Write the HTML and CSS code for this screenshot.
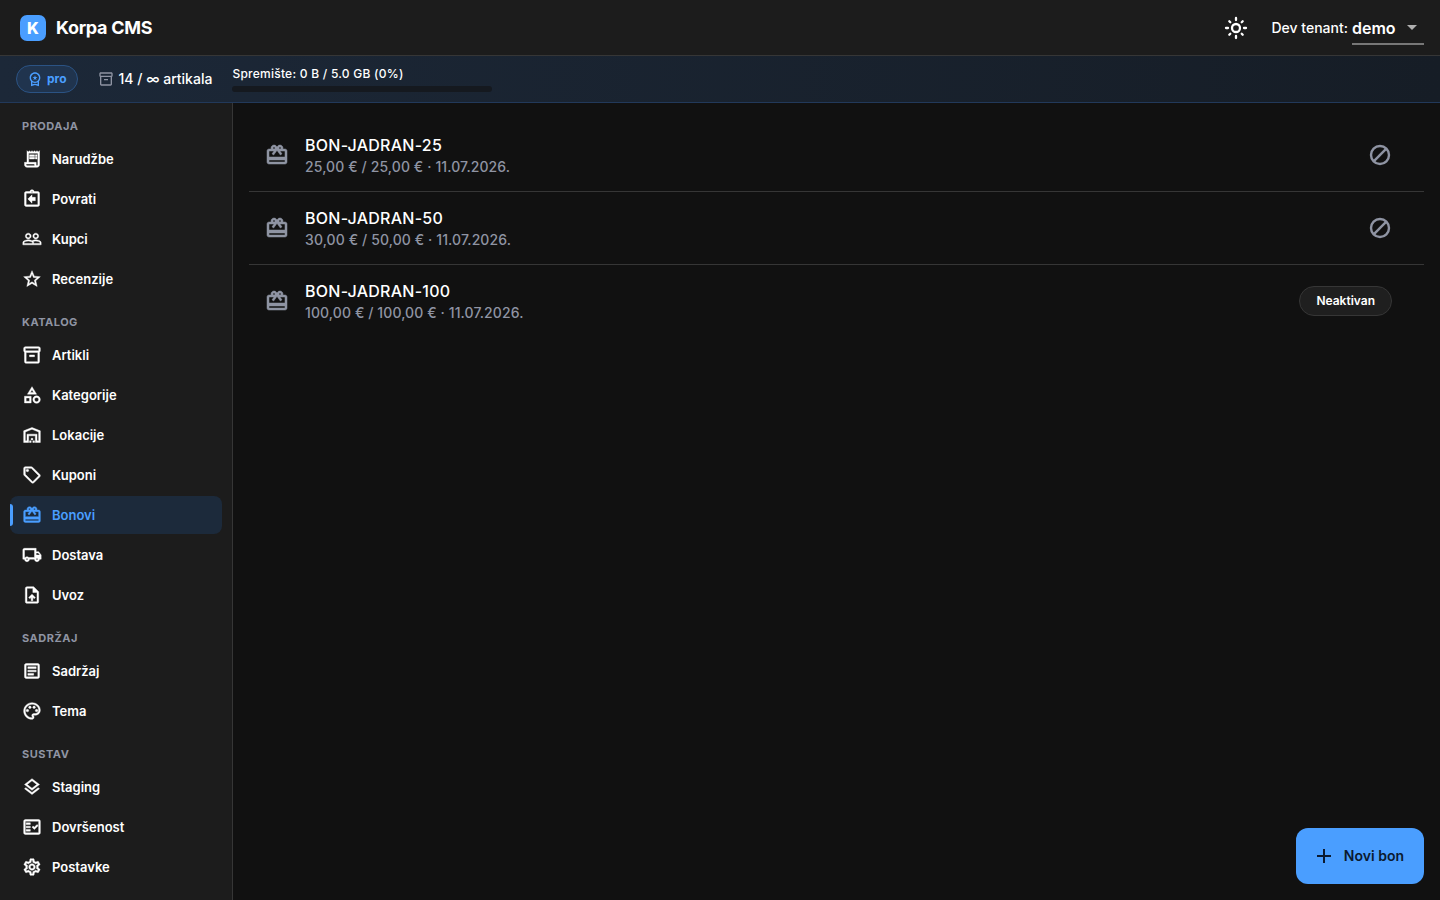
FILE: index.html
```html
<!DOCTYPE html>
<html lang="hr">
<head>
<meta charset="utf-8">
<meta name="viewport" content="width=device-width, initial-scale=1">
<title>Korpa CMS</title>
<link rel="stylesheet" href="styles.css">
</head>
<body>
<svg class="sprite" aria-hidden="true">
  <symbol id="gift" viewBox="0 0 24 24"><path d="M20 6h-2.18c.11-.31.18-.65.18-1 0-1.66-1.34-3-3-3-1.05 0-1.96.54-2.5 1.35l-.5.67-.5-.68C10.96 2.54 10.05 2 9 2 7.34 2 6 3.34 6 5c0 .35.07.69.18 1H4c-1.11 0-1.99.89-1.99 2L2 19c0 1.11.89 2 2 2h16c1.11 0 2-.89 2-2V8c0-1.11-.89-2-2-2zm-5-2c.55 0 1 .45 1 1s-.45 1-1 1-1-.45-1-1 .45-1 1-1zM9 4c.55 0 1 .45 1 1s-.45 1-1 1-1-.45-1-1 .45-1 1-1zm11 15H4v-2h16v2zm0-5H4V8h5.08L7 10.83 8.62 12 11 8.76l1-1.36 1 1.36L15.38 12 17 10.83 14.92 8H20v6z"/></symbol>
  <symbol id="box" viewBox="0 0 24 24"><path d="M20 2H4c-1 0-2 .9-2 2v3.01c0 .72.43 1.34 1 1.69V20c0 1.1 1.1 2 2 2h14c.9 0 2-.9 2-2V8.700c.57-.35 1-.97 1-1.690V4c0-1.100-1-2-2-2zm-1 18H5V9h14v11zm1-13H4V4h16v3zM9 12h6v2H9z"/></symbol>
  <symbol id="block" viewBox="0 0 24 24"><g fill="none" stroke="currentColor" stroke-width="2.4"><circle cx="12" cy="12" r="9"/><path d="M5.900 18.100L18.100 5.900"/></g></symbol>
</svg>

<header class="topbar">
  <div class="brand"><span class="brand-mark">K</span><span class="brand-name">Korpa CMS</span></div>
  <button class="icon-button theme" type="button" aria-label="Promijeni temu">
    <svg class="icon" viewBox="0 0 24 24"><g fill="none" stroke="currentColor" stroke-width="2.300" stroke-linecap="round"><circle cx="12" cy="12" r="4"/><path d="M12 2v2M12 20v2M2 12h2M20 12h2M5.300 5.300l1 1M17.700 17.700l1 1M18.700 5.300l-1 1M6.300 17.700l-1 1"/></g></svg>
  </button>
  <label class="tenant-label" for="tenant">Dev tenant:</label>
  <div class="select-wrap">
    <select id="tenant" class="tenant"><option>demo</option></select>
    <svg class="caret" viewBox="0 0 24 24"><path d="M7 10l5 5 5-5z"/></svg>
  </div>
</header>

<section class="planbar">
  <span class="plan"><svg class="plan-icon" viewBox="0 0 24 24"><path d="M9.680 13.690L12 11.930l2.310 1.760-.88-2.850L15.750 9h-2.840L12 6.190 11.090 9H8.250l2.310 1.840-.88 2.850zM20 10c0-4.420-3.580-8-8-8s-8 3.580-8 8c0 2.030.76 3.870 2 5.280V23l6-2 6 2v-7.720c1.240-1.410 2-3.250 2-5.280zm-8-6c3.310 0 6 2.690 6 6s-2.690 6-6 6-6-2.690-6-6 2.690-6 6-6zm0 15l-4 1.020v-3.100c1.180.68 2.540 1.080 4 1.080s2.820-.4 4-1.080v3.100L12 19z"/></svg>pro</span>
  <span class="usage"><svg class="usage-icon" viewBox="0 0 24 24"><use href="#box"/></svg>14 / ∞ artikala</span>
  <div class="storage"><span id="storage-label">Spremište: 0 B / 5.0 GB (0%)</span><div class="meter" role="progressbar" aria-labelledby="storage-label" aria-valuenow="0" aria-valuemin="0" aria-valuemax="100"></div></div>
</section>

<div class="shell">
  <nav class="sidebar">
    <h2 class="group">Prodaja</h2>
    <a class="item" href="#"><svg class="nav-icon" viewBox="0 0 24 24"><path d="M19.500 3.500L18 2l-1.500 1.500L15 2l-1.500 1.500L12 2l-1.500 1.500L9 2 7.500 3.500 6 2v14H3v3c0 1.660 1.340 3 3 3h12c1.660 0 3-1.340 3-3V2l-1.500 1.500zM15 20H6c-.55 0-1-.45-1-1v-1h10v2zm4-1c0 .55-.45 1-1 1s-1-.45-1-1v-3H8V5h11v14z"/><path d="M9 7h6v2H9zM16 7h2v2h-2zM9 10h6v2H9zM16 10h2v2h-2z"/></svg>Narudžbe</a>
    <a class="item" href="#"><svg class="nav-icon" viewBox="0 0 24 24"><path fill-rule="evenodd" d="M19 3h-4.180C14.400 1.840 13.300 1 12 1s-2.400.84-2.820 2H5c-1.100 0-2 .9-2 2v14c0 1.100.9 2 2 2h14c1.100 0 2-.9 2-2V5c0-1.100-.9-2-2-2zm-7-.25c.41 0 .75.34.75.75s-.34.75-.75.75-.75-.34-.75-.75.34-.75.75-.75zM19 19H5V5h14v14z"/><path d="M12 17v-3h4v-4h-4V7l-5 5z"/></svg>Povrati</a>
    <a class="item" href="#"><svg class="nav-icon" viewBox="0 0 24 24"><path d="M16.500 13c-1.200 0-3.070.34-4.500 1-1.430-.67-3.300-1-4.500-1C5.330 13 1 14.080 1 16.250V19h22v-2.750c0-2.170-4.330-3.250-6.500-3.250zm-4 4.500h-10v-1.250c0-.54 2.560-1.750 5-1.750s5 1.210 5 1.750v1.250zm9 0H14v-1.250c0-.46-.2-.86-.52-1.220.88-.3 1.960-.53 3.020-.53 2.440 0 5 1.210 5 1.750v1.250zM7.500 12c1.930 0 3.500-1.570 3.500-3.500S9.430 5 7.500 5 4 6.570 4 8.500 5.570 12 7.500 12zm0-5.500c1.100 0 2 .9 2 2s-.9 2-2 2-2-.9-2-2 .9-2 2-2zm9 5.500c1.930 0 3.500-1.570 3.500-3.500S18.430 5 16.500 5 13 6.570 13 8.500s1.570 3.500 3.500 3.500zm0-5.500c1.100 0 2 .9 2 2s-.9 2-2 2-2-.9-2-2 .9-2 2-2z"/></svg>Kupci</a>
    <a class="item" href="#"><svg class="nav-icon" viewBox="0 0 24 24"><path d="M22 9.240l-7.190-.62L12 2 9.190 8.630 2 9.240l5.460 4.730L5.820 21 12 17.270 18.180 21l-1.630-7.030L22 9.240zM12 15.400l-3.760 2.270 1-4.280-3.320-2.880 4.380-.38L12 6.100l1.710 4.040 4.380.38-3.320 2.880 1 4.280L12 15.400z"/></svg>Recenzije</a>
    <h2 class="group">Katalog</h2>
    <a class="item" href="#"><svg class="nav-icon" viewBox="0 0 24 24"><use href="#box"/></svg>Artikli</a>
    <a class="item" href="#"><svg class="nav-icon" viewBox="0 0 24 24"><path d="M12 2l-5.500 9h11L12 2zm0 3.840L13.930 9h-3.870L12 5.840zM17.500 13c-2.490 0-4.500 2.010-4.500 4.500s2.010 4.500 4.500 4.500 4.500-2.010 4.500-4.500-2.010-4.500-4.500-4.500zm0 7c-1.380 0-2.500-1.120-2.500-2.500s1.120-2.500 2.500-2.500 2.500 1.120 2.500 2.500-1.120 2.500-2.500 2.500zM3 21.500h8v-8H3v8zm2-6h4v4H5v-4z"/></svg>Kategorije</a>
    <a class="item" href="#"><svg class="nav-icon" viewBox="0 0 24 24"><path d="M20 8.350V19h-2v-8H6v8H4V8.350l8-3.200 8 3.200zM22 21V7L12 3 2 7v14h6v-8h8v8h6z"/><path d="M9 19h2v2H9zM11 16h2v2h-2zM13 19h2v2h-2z"/></svg>Lokacije</a>
    <a class="item" href="#"><svg class="nav-icon" viewBox="0 0 24 24"><path d="M21.410 11.410l-8.830-8.830c-.37-.37-.88-.58-1.410-.58H4c-1.100 0-2 .9-2 2v7.170c0 .53.21 1.040.59 1.410l8.830 8.830c.78.78 2.050.78 2.830 0l7.170-7.170c.78-.78.78-2.040-.01-2.830zM12.830 20L4 11.170V4h7.170L20 12.830 12.830 20z"/><circle cx="6.500" cy="6.500" r="1.500"/></svg>Kuponi</a>
    <a class="item active" href="#" aria-current="page"><svg class="nav-icon" viewBox="0 0 24 24"><use href="#gift"/></svg>Bonovi</a>
    <a class="item" href="#"><svg class="nav-icon" viewBox="0 0 24 24"><path d="M20 8h-3V4H3c-1.100 0-2 .9-2 2v11h2c0 1.660 1.340 3 3 3s3-1.340 3-3h6c0 1.660 1.340 3 3 3s3-1.340 3-3h2v-5l-3-4zm-.5 1.500l1.960 2.500H17V9.500h2.500zM6 18c-.55 0-1-.45-1-1s.45-1 1-1 1 .45 1 1-.45 1-1 1zm2.220-3c-.55-.61-1.330-1-2.220-1s-1.670.39-2.220 1H3V6h12v9H8.220zM18 18c-.55 0-1-.45-1-1s.45-1 1-1 1 .45 1 1-.45 1-1 1z"/></svg>Dostava</a>
    <a class="item" href="#"><svg class="nav-icon" viewBox="0 0 24 24"><path d="M14 2H6c-1.100 0-1.990.9-1.990 2L4 20c0 1.100.89 2 1.990 2H18c1.100 0 2-.9 2-2V8l-6-6zm4 18H6V4h7v5h5v11zM8 15.010l1.410 1.410L11 14.840V19h2v-4.160l1.590 1.590L16 15.010 12.010 11 8 15.010z"/></svg>Uvoz</a>
    <h2 class="group">Sadržaj</h2>
    <a class="item" href="#"><svg class="nav-icon" viewBox="0 0 24 24"><path d="M19 5v14H5V5h14m0-2H5c-1.100 0-2 .9-2 2v14c0 1.100.9 2 2 2h14c1.100 0 2-.9 2-2V5c0-1.100-.9-2-2-2z"/><path d="M14 17H7v-2h7v2zm3-4H7v-2h10v2zm0-4H7V7h10v2z"/></svg>Sadržaj</a>
    <a class="item" href="#"><svg class="nav-icon" viewBox="0 0 24 24"><path d="M12 22C6.490 22 2 17.510 2 12S6.490 2 12 2s10 4.040 10 9c0 3.310-2.690 6-6 6h-1.770c-.28 0-.5.22-.5.5 0 .12.05.23.13.33.41.47.64 1.060.64 1.670 0 1.380-1.120 2.500-2.500 2.500zm0-18c-4.410 0-8 3.590-8 8s3.590 8 8 8c.28 0 .5-.22.5-.5 0-.16-.08-.28-.14-.35-.41-.46-.63-1.050-.63-1.650 0-1.380 1.120-2.500 2.500-2.500H16c2.210 0 4-1.790 4-4 0-3.860-3.590-7-8-7z"/><circle cx="6.500" cy="11.500" r="1.500"/><circle cx="9.500" cy="7.500" r="1.500"/><circle cx="14.500" cy="7.500" r="1.500"/><circle cx="17.500" cy="11.500" r="1.500"/></svg>Tema</a>
    <h2 class="group">Sustav</h2>
    <a class="item" href="#"><svg class="nav-icon" viewBox="0 0 24 24"><path d="M11.990 18.540l-7.370-5.730L3 14.070l9 7 9-7-1.630-1.270-7.380 5.740zM12 16l7.360-5.730L21 9l-9-7-9 7 1.630 1.270L12 16zm0-11.470L17.740 9 12 13.470 6.260 9 12 4.530z"/></svg>Staging</a>
    <a class="item" href="#"><svg class="nav-icon" viewBox="0 0 24 24"><path d="M20 3H4c-1.100 0-2 .9-2 2v14c0 1.100.9 2 2 2h16c1.100 0 2-.9 2-2V5c0-1.100-.9-2-2-2zm0 16H4V5h16v14z"/><path d="M19.410 10.420L17.990 9l-3.170 3.170-1.410-1.420L12 12.160 14.820 15zM5 7h5v2H5zM5 11h5v2H5zM5 15h5v2H5z"/></svg>Dovršenost</a>
    <a class="item" href="#"><svg class="nav-icon" viewBox="0 0 24 24"><path d="M19.430 12.980c.04-.32.07-.64.07-.98 0-.34-.03-.66-.07-.98l2.110-1.650c.19-.15.24-.42.12-.64l-2-3.460c-.09-.16-.26-.25-.44-.25-.06 0-.12.01-.17.03l-2.490 1c-.52-.4-1.080-.73-1.690-.98l-.38-2.650C14.460 2.180 14.250 2 14 2h-4c-.25 0-.46.18-.49.42l-.38 2.650c-.61.25-1.170.59-1.690.98l-2.490-1c-.06-.02-.12-.03-.18-.03-.17 0-.34.09-.43.25l-2 3.460c-.13.22-.07.49.12.64l2.110 1.650c-.04.32-.07.65-.07.98 0 .33.03.66.07.98l-2.110 1.650c-.19.15-.24.42-.12.64l2 3.460c.09.16.26.25.44.25.06 0 .12-.01.17-.03l2.490-1c.52.4 1.080.73 1.690.98l.38 2.650c.03.24.24.42.49.42h4c.25 0 .46-.18.49-.42l.38-2.650c.61-.25 1.170-.59 1.690-.98l2.490 1c.06.02.12.03.18.03.17 0 .34-.09.43-.25l2-3.460c.12-.22.07-.49-.12-.64l-2.110-1.650zm-1.980-1.710c.04.31.05.52.05.73 0 .21-.02.43-.05.73l-.14 1.130.89.7 1.080.84-.7 1.210-1.270-.51-1.040-.42-.9.68c-.43.32-.84.56-1.250.73l-1.060.43-.16 1.130-.2 1.350h-1.400l-.19-1.350-.16-1.130-1.060-.43c-.43-.18-.83-.41-1.230-.71l-.91-.7-1.060.43-1.270.51-.7-1.210 1.080-.84.89-.7-.14-1.130c-.03-.31-.05-.54-.05-.74s.02-.43.05-.73l.14-1.130-.89-.7-1.080-.84.7-1.210 1.270.51 1.040.42.9-.68c.43-.32.84-.56 1.250-.73l1.060-.43.16-1.130.2-1.350h1.390l.19 1.350.16 1.130 1.060.43c.43.18.83.41 1.230.71l.91.7 1.060-.43 1.270-.51.7 1.210-1.070.85-.89.7.14 1.130zM12 8c-2.210 0-4 1.790-4 4s1.790 4 4 4 4-1.790 4-4-1.790-4-4-4zm0 6c-1.100 0-2-.9-2-2s.9-2 2-2 2 .9 2 2-.9 2-2 2z"/></svg>Postavke</a>
  </nav>

  <main class="content">
    <ul class="vouchers">
      <li class="voucher"><svg class="icon heavy muted" viewBox="0 0 24 24"><use href="#gift"/></svg><div class="voucher-text"><span class="code">BON-JADRAN-25</span><span class="detail">25,00 € / 25,00 € · 11.07.2026.</span></div><button class="icon-button muted" type="button" aria-label="Deaktiviraj BON-JADRAN-25"><svg class="icon" viewBox="0 0 24 24"><use href="#block"/></svg></button></li>
      <li class="voucher"><svg class="icon heavy muted" viewBox="0 0 24 24"><use href="#gift"/></svg><div class="voucher-text"><span class="code">BON-JADRAN-50</span><span class="detail">30,00 € / 50,00 € · 11.07.2026.</span></div><button class="icon-button muted" type="button" aria-label="Deaktiviraj BON-JADRAN-50"><svg class="icon" viewBox="0 0 24 24"><use href="#block"/></svg></button></li>
      <li class="voucher"><svg class="icon heavy muted" viewBox="0 0 24 24"><use href="#gift"/></svg><div class="voucher-text"><span class="code">BON-JADRAN-100</span><span class="detail">100,00 € / 100,00 € · 11.07.2026.</span></div><span class="status">Neaktivan</span></li>
    </ul>
  </main>
</div>
<button class="fab" type="button"><svg class="icon" viewBox="0 0 24 24"><path d="M19 13h-6v6h-2v-6H5v-2h6V5h2v6h6z"/></svg>Novi bon</button>
</body>
</html>
```
FILE: styles.css
```css
* { box-sizing: border-box; }

body {
  display: flex;
  flex-direction: column;
  min-height: 100vh;
  margin: 0;
  background: #111111;
  color: #ffffff;
  font-family: Inter, "Liberation Sans", sans-serif;
  font-size: 14px;
  line-height: 20px;
}

svg { flex: none; fill: currentColor; }
button, select { font: inherit; color: inherit; }
.sprite { display: none; }
.icon { display: block; width: 24px; height: 24px; }
.heavy { stroke: currentColor; stroke-width: 0.5px; }
.icon-button { padding: 0; border: 0; background: none; cursor: pointer; }
.muted { color: #8f94a3; }

.topbar {
  display: flex;
  align-items: center;
  height: 56px;
  padding: 0 16px 0 20px;
  background: #1c1c1c;
  border-bottom: 1px solid #363636;
}
.brand { display: flex; align-items: center; gap: 10px; margin-right: auto; }
.brand-mark {
  width: 26px;
  border-radius: 7px;
  background: #4a9eff;
  font-size: 16px;
  font-weight: 800;
  line-height: 26px;
  text-align: center;
}
.brand-name { font-size: 18px; font-weight: 700; letter-spacing: -0.3px; }
.theme { margin-right: 24px; }
.tenant-label { margin-right: 4px; font-weight: 500; }
.select-wrap { position: relative; width: 72px; padding-top: 2px; border-bottom: 2px solid #777777; }
.tenant {
  display: block;
  width: 100%;
  height: 30px;
  padding: 0;
  border: 0;
  background: transparent;
  appearance: none;
  font-size: 16px;
  font-weight: 600;
}
.tenant option { background: #1c1c1c; }
.caret { position: absolute; top: 4px; right: 0; width: 24px; height: 24px; color: #b0b0b0; pointer-events: none; }

.planbar {
  display: flex;
  align-items: center;
  gap: 20px;
  height: 47px;
  padding: 0 16px;
  background: linear-gradient(90deg, #1c2838, #161d26);
  border-bottom: 1px solid #22395a;
}
.plan {
  display: flex;
  align-items: center;
  gap: 4px;
  height: 28px;
  padding: 0 10px;
  border: 1px solid #2b5384;
  border-radius: 14px;
  background: #20344e;
  color: #4a9eff;
  font-size: 12px;
  font-weight: 700;
}
.plan-icon { width: 16px; height: 16px; }
.usage { display: flex; align-items: center; gap: 5px; font-weight: 500; }
.usage-icon { width: 16px; height: 16px; color: #8f94a3; }
.storage { width: 260px; font-size: 12px; font-weight: 500; line-height: 16px; letter-spacing: 0.25px; }
.meter { height: 6px; margin-top: 4px; border-radius: 3px; background: #15191f; }

.shell { display: flex; flex: 1; }
.sidebar {
  flex: none;
  width: 233px;
  padding: 1px 10px;
  background: #1c1c1c;
  border-right: 1px solid #363636;
}
.group {
  margin: 0;
  padding: 14px 12px 5px;
  color: #8f94a3;
  font-size: 11px;
  font-weight: 700;
  line-height: 16px;
  letter-spacing: 0.5px;
  text-transform: uppercase;
}
.item {
  display: flex;
  align-items: center;
  gap: 10px;
  height: 38px;
  margin: 1px 0 2px;
  padding: 0 12px;
  border-radius: 8px;
  color: #ffffff;
  font-size: 13px;
  font-weight: 600;
  text-decoration: none;
}
.nav-icon { width: 20px; height: 20px; stroke: currentColor; stroke-width: 0.5px; }
.active { position: relative; background: #1c2a3b; color: #4a9eff; }
.active::before {
  content: "";
  position: absolute;
  inset: 8px auto 8px 0;
  width: 3px;
  border-radius: 0 3px 3px 0;
  background: #4a9eff;
}

.content { flex: 1; min-width: 0; padding: 16px; }
.vouchers { margin: 0; padding: 0; list-style: none; }
.voucher {
  display: flex;
  align-items: center;
  gap: 16px;
  min-height: 73px;
  padding: 0 32px 0 16px;
  border-bottom: 1px solid #363636;
}
.voucher:last-child { border-bottom-color: transparent; }
.voucher-text { display: flex; flex: 1; flex-direction: column; }
.code { font-size: 16px; font-weight: 500; line-height: 24px; letter-spacing: 0.25px; }
.detail { color: #8f94a3; font-weight: 500; letter-spacing: 0.1px; }
.status {
  padding: 0 16px;
  border: 1px solid #363636;
  border-radius: 15px;
  background: #1f1f1f;
  font-size: 12px;
  font-weight: 600;
  line-height: 28px;
}
.fab {
  position: fixed;
  right: 16px;
  bottom: 16px;
  display: flex;
  align-items: center;
  gap: 8px;
  height: 56px;
  padding: 0 20px 0 16px;
  border: 0;
  border-radius: 12px;
  background: #4a9eff;
  color: #0b1a30;
  font-size: 14px;
  font-weight: 600;
}
```
